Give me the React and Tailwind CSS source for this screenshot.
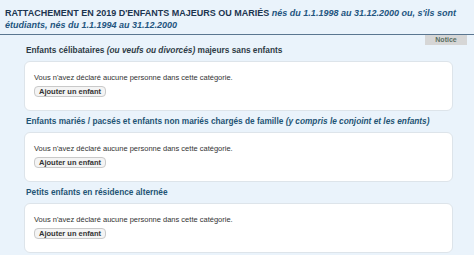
export default function App() {
  const sections = [
    {
      title: (
        <>
          Enfants célibataires <i>(ou veufs ou divorcés)</i> majeurs sans enfants
        </>
      ),
      color: "text-[#2e3b45]",
    },
    {
      title: (
        <>
          Enfants mariés / pacsés et enfants non mariés chargés de famille{" "}
          <i>(y compris le conjoint et les enfants)</i>
        </>
      ),
      color: "text-[#1f5474]",
    },
    {
      title: <>Petits enfants en résidence alternée</>,
      color: "text-[#1f5474]",
    },
  ];
  return (
    <div className="w-[474px] h-[255px] overflow-hidden bg-[#eaf3fb] font-['Liberation_Sans',Arial,sans-serif]">
      <div className="px-[5px] pt-[7px] pb-[3px] border-b border-[#5a7690] text-[9px] leading-[12px] font-bold text-[#1c3550]">
        RATTACHEMENT EN 2019 D'ENFANTS MAJEURS OU MARIÉS{" "}
        <i className="text-[#23557f]">
          nés du 1.1.1998 au 31.12.2000 ou, s'ils sont étudiants, nés du 1.1.1994 au 31.12.2000
        </i>
      </div>
      <div className="flex justify-end pr-[7px]">
        <div className="w-[42px] h-[10px] bg-[#d6d6d6] text-[7px] leading-[10px] font-bold text-[#5a6e62] text-center">
          Notice
        </div>
      </div>
      <div className="pl-[24px] pr-[21px] flex flex-col">
        {sections.map((s, i) => (
          <div key={i} className={i === 0 ? "" : "mt-[5px]"}>
            <div className={`pl-[2px] text-[8.3px] leading-[11px] font-bold ${s.color}`}>
              {s.title}
            </div>
            <div className="mt-[5px] h-[50px] bg-white border border-[#dde4ea] rounded-[6px] pl-[9px] pt-[11px] flex flex-col items-start">
              <div className="text-[7.5px] leading-[9px] text-[#333]">
                Vous n'avez déclaré aucune personne dans cette catégorie.
              </div>
              <button className="mt-[4px] block h-[11px] px-[4px] rounded-[4px] border border-[#c9c9c9] bg-[#f4f4f4] text-[7.5px] leading-[9px] font-bold text-[#333]">
                Ajouter un enfant
              </button>
            </div>
          </div>
        ))}
      </div>
    </div>
  );
}
